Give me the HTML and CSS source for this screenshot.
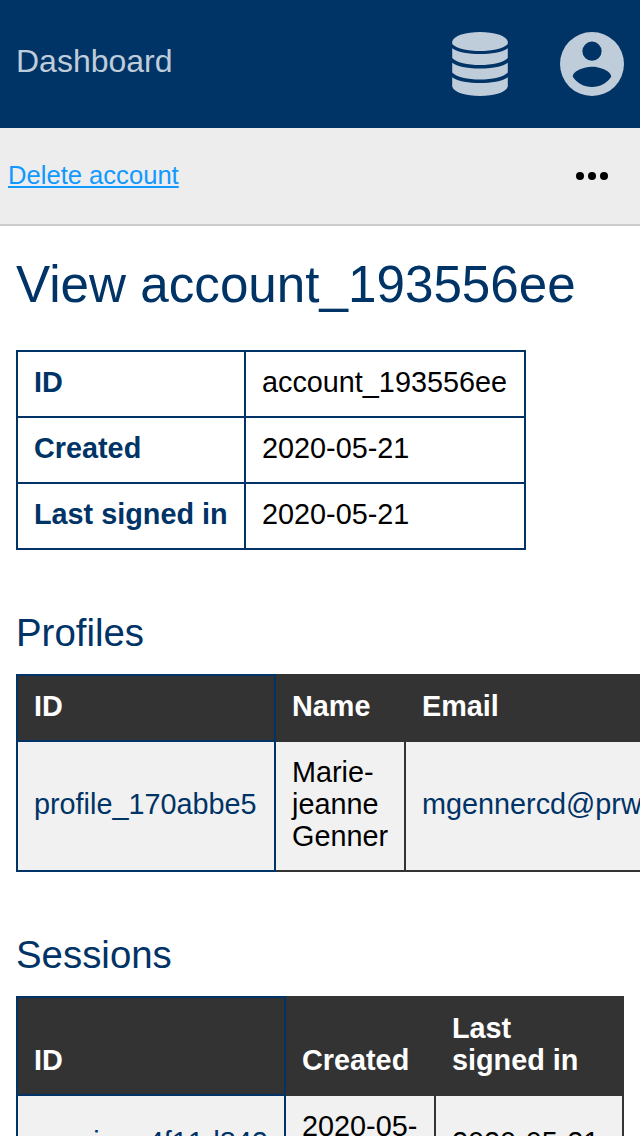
FILE: index.html
```html
<!DOCTYPE html>
<html lang="en">
<head>
<meta charset="utf-8">
<title>View account</title>
<link rel="stylesheet" href="styles.css">
</head>
<body>
<header class="topbar">
  <a class="brand">Dashboard</a>
  <nav class="topnav">
    <svg class="icon" viewBox="0 0 64 64" aria-label="Data">
      <path d="M4.200 9.500C6 3.500 18 0 32 0S58 3.500 59.800 9.500V12C56 16.500 44 19 32 19S8 16.500 4.200 12Z"/>
      <path d="M4.200 16.300C10 20.500 21 22 32 22S54 20.500 59.800 16.300V26C56 30.500 44 33 32 33S8 30.500 4.200 26Z"/>
      <path d="M4.200 30.800C10 35 21 36.500 32 36.500S54 35 59.800 30.800V40.500C56 45 44 47.500 32 47.500S8 45 4.200 40.500Z"/>
      <path d="M4.200 45.300C10 49.500 21 51 32 51S54 49.500 59.800 45.300V54.500C58 60.500 46 64 32 64S6 60.500 4.200 54.500Z"/>
    </svg>
    <svg class="icon" viewBox="0 0 64 64" aria-label="Account">
      <path fill-rule="evenodd" d="M32 0A32 32 0 1 1 32 64A32 32 0 1 1 32 0ZM32 9.600A9.600 9.600 0 1 0 32 28.800A9.600 9.600 0 1 0 32 9.600ZM32 55C40 55 47.100 50.900 51.200 44.700C51.100 38.300 38.400 34.800 32 34.800S12.900 38.300 12.800 44.700C16.900 50.900 24 55 32 55Z"/>
    </svg>
  </nav>
</header>
<div class="actions">
  <a class="delete">Delete account</a>
  <svg class="more" viewBox="0 0 32 8" aria-label="More"><circle cx="4" cy="4" r="4"/><circle cx="16" cy="4" r="4"/><circle cx="28" cy="4" r="4"/></svg>
</div>
<main class="content">
  <h1 class="title">View account_193556ee</h1>
  <table class="details">
    <colgroup><col class="label-col"><col class="value-col"></colgroup>
    <tr><th>ID</th><td>account_193556ee</td></tr>
    <tr><th>Created</th><td>2020-05-21</td></tr>
    <tr><th>Last signed in</th><td>2020-05-21</td></tr>
  </table>
  <h2 class="subtitle">Profiles</h2>
  <table class="list profiles">
    <colgroup><col class="profile-id"><col class="profile-name"><col class="profile-email"></colgroup>
    <thead><tr><th>ID</th><th>Name</th><th>Email</th></tr></thead>
    <tbody><tr><td><a>profile_170abbe5</a></td><td>Marie-jeanne Genner</td><td><a>mgennercd@prweb.com</a></td></tr></tbody>
  </table>
  <h2 class="subtitle">Sessions</h2>
  <table class="list sessions">
    <colgroup><col class="session-id"><col class="session-created"><col class="session-last"></colgroup>
    <thead><tr><th>ID</th><th>Created</th><th>Last signed in</th></tr></thead>
    <tbody><tr><td><a class="session-link">session_4f11d842</a></td><td>2020-05-21</td><td>2020-05-21</td></tr></tbody>
  </table>
</main>
</body>
</html>
```
FILE: styles.css
```css
* { box-sizing: border-box; }
html, body { height: 1136px; overflow: hidden; }
body {
  margin: 0;
  background: #fff;
  color: #000;
  font-family: "Liberation Sans", Arial, sans-serif;
  font-size: 28.8px;
  line-height: 32px;
}
.topbar {
  display: flex;
  align-items: center;
  justify-content: space-between;
  height: 128px;
  padding: 0 16px;
  background: #003366;
  color: #bfccd9;
}
.brand { font-size: 32px; line-height: 36px; padding-bottom: 6px; }
.topnav { display: flex; gap: 48px; }
.icon { display: block; width: 64px; height: 64px; fill: #bfccd9; }
.actions {
  display: flex;
  align-items: center;
  justify-content: space-between;
  height: 98px;
  padding: 0 32px 0 8px;
  background: #ededed;
  border-bottom: 2px solid #ccc;
}
.delete {
  color: #1199ff;
  font-size: 25.6px;
  line-height: 30px;
  padding-bottom: 2px;
  text-decoration: underline;
}
.more { display: block; width: 32px; height: 8px; }
.content { padding: 0 16px; }
.title {
  margin: 0;
  padding: 30px 0 36px;
  color: #003366;
  font-size: 51.2px;
  font-weight: 400;
  line-height: 58px;
}
.subtitle {
  margin: 0;
  padding: 61px 0 19px;
  color: #003366;
  font-size: 38.4px;
  font-weight: 400;
  line-height: 44px;
}
table { border-collapse: collapse; table-layout: fixed; }
th, td { padding: 14px 16px 18px; text-align: left; }
.details { width: 510px; }
.details th, .details td { border: 2px solid #003366; }
.details th { color: #003366; white-space: nowrap; }
.label-col { width: 228px; }
.value-col { width: 280px; }
.list th, .list td { border: 2px solid #333; }
.list th { background: #333; color: #fff; vertical-align: bottom; }
.list td { background: #f1f1f1; vertical-align: middle; }
.list th:first-child, .list td:first-child { border-color: #003366; }
.list a { color: #003366; }
.list .session-link { font-kerning: none; }
.profiles { width: 720px; }
.profile-id { width: 258px; }
.profile-name { width: 130px; }
.profile-email { width: 330px; }
.sessions { width: 608px; }
.session-id { width: 268px; }
.session-created { width: 150px; }
.session-last { width: 188px; }
```
